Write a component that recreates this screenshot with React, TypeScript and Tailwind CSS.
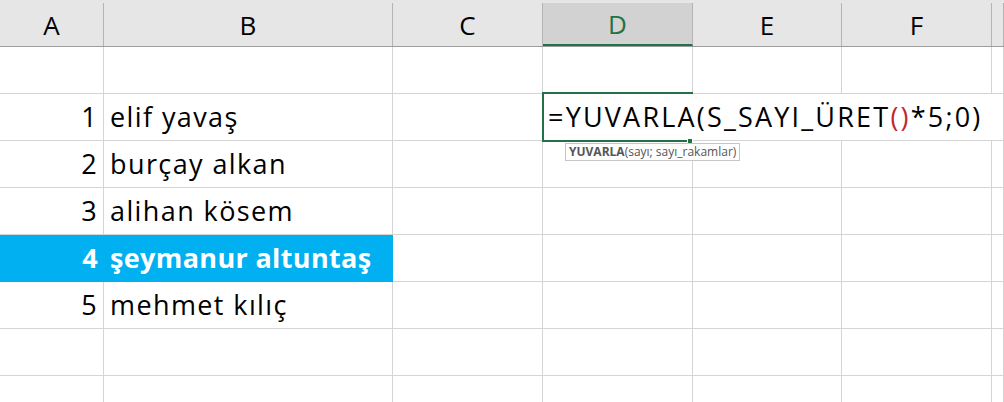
import React from "react";

const cols = [
  { key: "A", w: "w-[104px]" },
  { key: "B", w: "w-[289px]" },
  { key: "C", w: "w-[150px]" },
  { key: "D", w: "w-[150px]" },
  { key: "E", w: "w-[149px]" },
  { key: "F", w: "w-[150px]" },
  { key: "G", w: "flex-1" },
];

const rows: { n?: string; name?: string; hi?: boolean }[] = [
  {},
  { n: "1", name: "elif yavaş" },
  { n: "2", name: "burçay alkan" },
  { n: "3", name: "alihan kösem" },
  { n: "4", name: "şeymanur altuntaş", hi: true },
  { n: "5", name: "mehmet kılıç" },
  {},
  {},
];

export default function App() {
  return (
    <div
      className="relative h-[402px] w-[1004px] overflow-hidden bg-white text-black"
      style={{ fontFamily: "'Open Sans', Lato, sans-serif" }}
    >
      {/* column headers */}
      <div className="flex h-[47px] border-b border-[#9c9c9c] bg-[#e6e6e6] pt-[3px]">
        {cols.map((c) => (
          <div
            key={c.key}
            className={`${c.w} flex shrink-0 items-center justify-center border-r border-[#b4b4b4] pt-[2px] text-[26px] ${
              c.key === "D"
                ? "border-b-2 border-b-[#217346] bg-[#d2d2d2] text-[#217346]"
                : ""
            }`}
          >
            {c.key === "G" ? "" : c.key}
          </div>
        ))}
      </div>

      {/* rows */}
      {rows.map((r, i) => (
        <div key={i} className="flex h-[47px]">
          {cols.map((c) => {
            const hiCell = r.hi && (c.key === "A" || c.key === "B");
            return (
              <div
                key={c.key}
                className={`${c.w} flex shrink-0 items-center border-b border-r text-[27px] ${
                  hiCell
                    ? "border-[#00b0f0] bg-[#00b0f0] font-bold tracking-[0.35px] text-white"
                    : "border-[#d4d4d4] tracking-[1.4px]"
                } ${c.key === "A" ? "justify-end pr-[5px]" : "pl-[6px]"}`}
              >
                {c.key === "A" && r.n}
                {c.key === "B" && r.name}
              </div>
            );
          })}
        </div>
      ))}

      {/* cell being edited */}
      <div className="absolute left-[544px] top-[94px] flex h-[46px] w-[450px] items-center bg-white pl-[4px] text-[27px] tracking-[2.2px] whitespace-nowrap">
        =YUVARLA(S_SAYI_ÜRET<span className="text-[#c0282d]">()</span>*5;0)
      </div>
      <div className="absolute left-[542px] top-[92px] h-[50px] w-[151px] border-2 border-r-0 border-[#217346]" />
      <div className="absolute left-[687px] top-[138px] h-[6px] w-[6px] border border-white bg-[#217346]" />

      {/* function tooltip */}
      <div className="absolute left-[565px] top-[143px] flex h-[18px] items-center border border-[#c6c6c6] bg-white px-[3px] text-[12px] leading-none text-[#555]">
        <span className="font-bold">YUVARLA</span>(sayı; sayı_rakamlar)
      </div>
    </div>
  );
}
